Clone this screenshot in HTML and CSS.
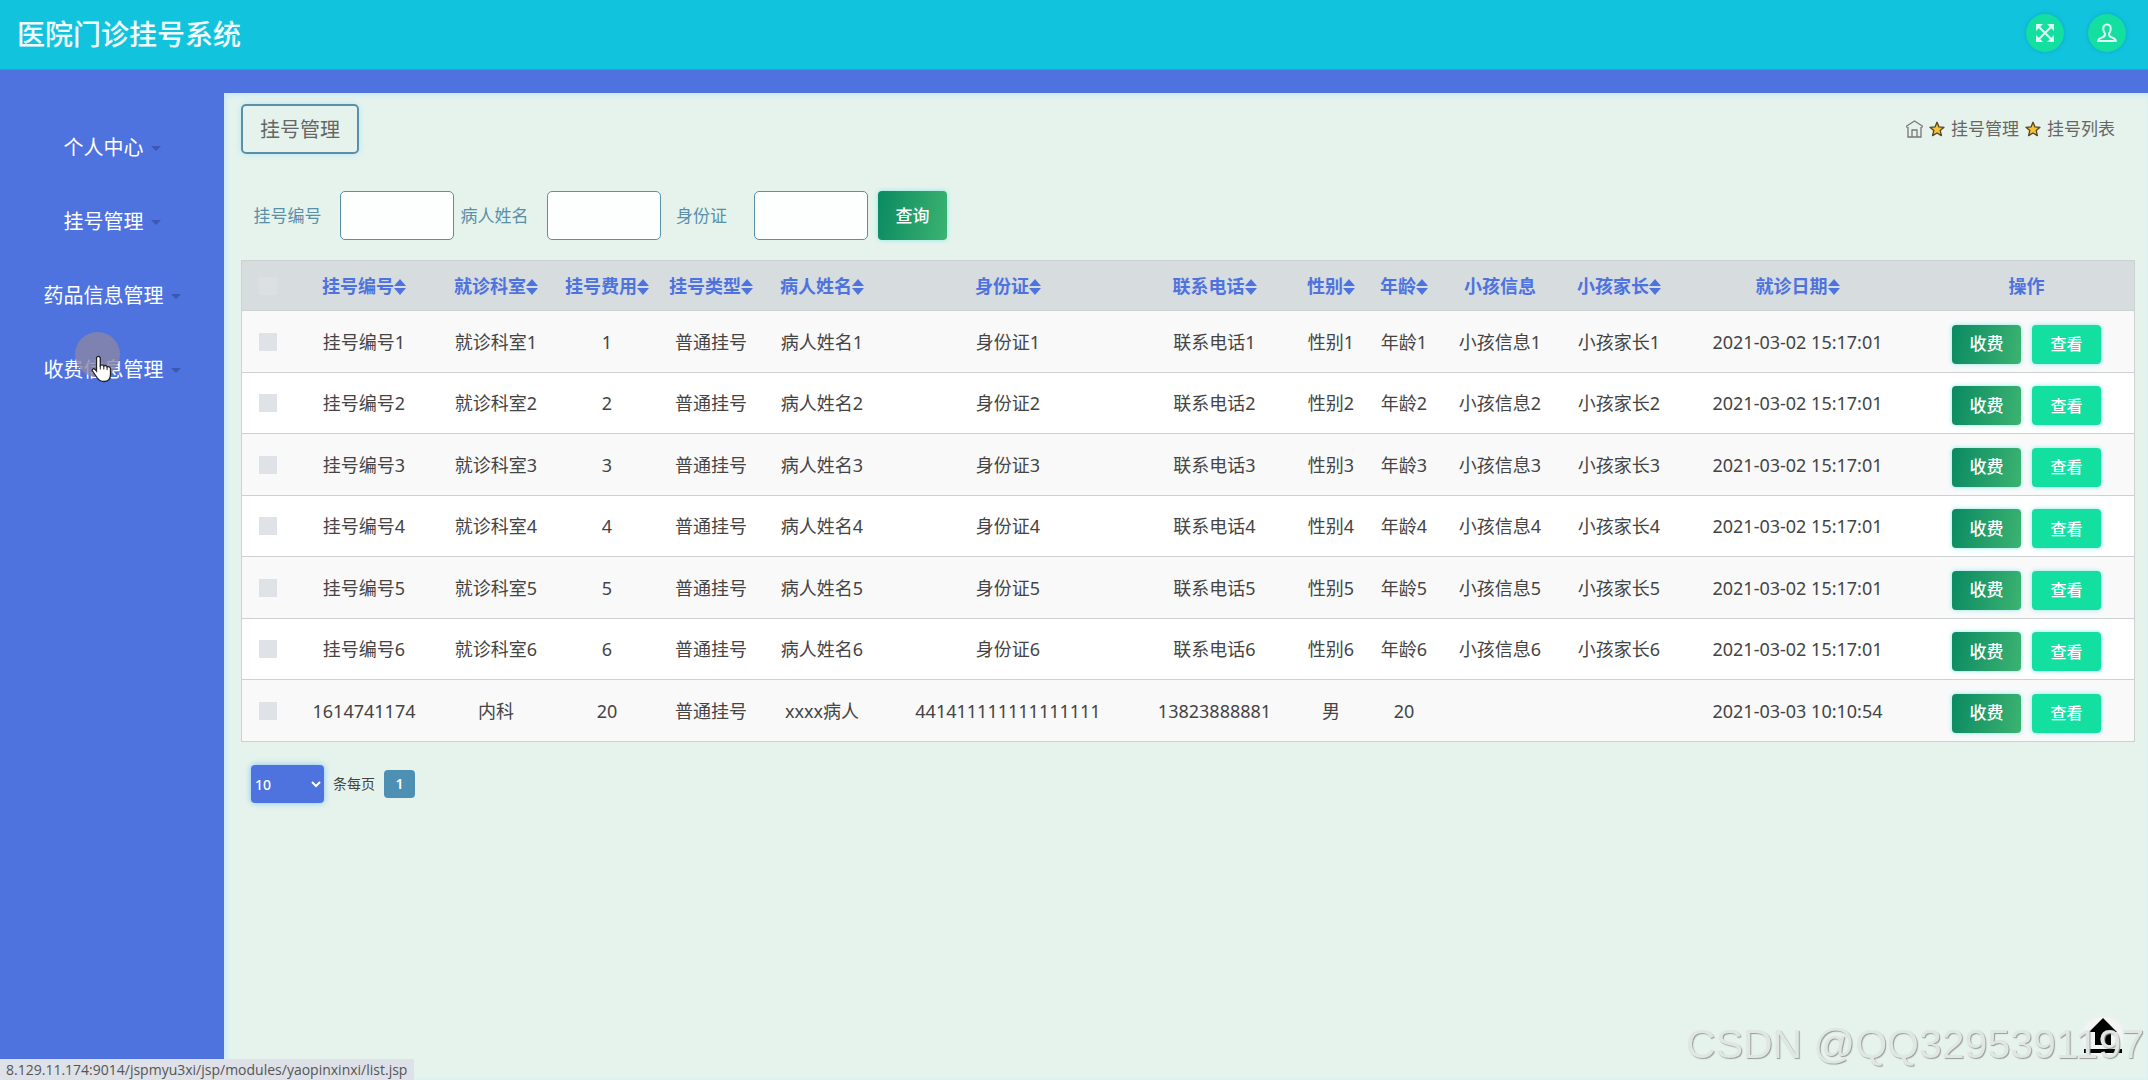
FILE: index.html
```html
<!DOCTYPE html>
<html lang="zh-CN">
<head>
<meta charset="utf-8">
<title>医院门诊挂号系统</title>
<link rel="stylesheet" href="styles.css">
</head>
<body>
<svg class="sprite" aria-hidden="true">
  <symbol id="sort" viewBox="0 0 12 16"><path d="M6 0l6 7H0zM6 16l6-7H0z"/></symbol>
  <symbol id="star" viewBox="0 0 16 16"><path d="M8 1.2l2 4.700 5 .4-3.800 3.300 1.200 5L8 12l-4.400 2.600 1.200-5L1 6.300l5-.4z" fill="#f5c33b" stroke="#54441c" stroke-width="1.300" stroke-linejoin="round"/></symbol>
</svg>
<header class="topbar">
  <h1 class="brand">医院门诊挂号系统</h1>
  <div class="tools">
    <button class="round" type="button" aria-label="全屏"><svg width="18" height="18" viewBox="0 0 18 18"><path d="M3 3l12 12M15 3L3 15" stroke="#dffaf0" stroke-width="2"/><path d="M0 0h7L0 7zM18 0v7l-7-7zM0 18v-7l7 7zM18 18h-7l7-7z" fill="#dffaf0"/></svg></button>
    <button class="round" type="button" aria-label="用户"><svg width="20" height="20" viewBox="0 0 20 20" fill="none" stroke="#dffaf0" stroke-width="2"><path d="M10 1.500c3 0 3.900 2 3.700 4.800-.2 2.200-1 3.500-1.700 4.300-.5 2.400.5 3.100 3 3.900 2.300.7 3.500 1.700 3.800 3.500H1.200c.3-1.800 1.500-2.800 3.800-3.500 2.500-.8 3.500-1.500 3-3.900-.7-.8-1.500-2.100-1.700-4.300C6.100 3.500 7 1.500 10 1.500z"/></svg></button>
  </div>
</header>
<div class="shell">
  <nav class="side">
    <a href="#">个人中心</a>
    <a href="#">挂号管理</a>
    <a href="#">药品信息管理</a>
    <a href="#">收费信息管理</a>
  </nav>
  <main class="content">
    <div class="heading">
      <h2 class="title">挂号管理</h2>
      <div class="crumbs">
        <svg width="17" height="18" viewBox="0 0 17 18" fill="none" stroke="#777" stroke-width="1.300"><path d="M.7 7.500V6L8.500 1l7.800 5v1.500M2 7v10h13V7M6 17v-7h5v7"/></svg>
        <svg class="star"><use href="#star"/></svg><a href="#">挂号管理</a>
        <svg class="star"><use href="#star"/></svg><span>挂号列表</span>
      </div>
    </div>
    <form class="search">
      <label for="no">挂号编号</label><input id="no" type="text">
      <label for="name">病人姓名</label><input id="name" type="text">
      <label for="card">身份证</label><input id="card" type="text">
      <button class="btn pay query" type="button">查询</button>
    </form>
    <table class="list">
      <colgroup><col class="c0"><col class="c1"><col class="c2"><col class="c3"><col class="c4"><col class="c5"><col class="c6"><col class="c7"><col class="c8"><col class="c9"><col class="c10"><col class="c11"><col class="c12"><col class="c13"></colgroup>
      <thead><tr>
        <th><input type="checkbox" aria-label="全选"></th>
        <th>挂号编号<svg class="sort"><use href="#sort"/></svg></th>
        <th>就诊科室<svg class="sort"><use href="#sort"/></svg></th>
        <th>挂号费用<svg class="sort"><use href="#sort"/></svg></th>
        <th>挂号类型<svg class="sort"><use href="#sort"/></svg></th>
        <th>病人姓名<svg class="sort"><use href="#sort"/></svg></th>
        <th>身份证<svg class="sort"><use href="#sort"/></svg></th>
        <th>联系电话<svg class="sort"><use href="#sort"/></svg></th>
        <th>性别<svg class="sort"><use href="#sort"/></svg></th>
        <th>年龄<svg class="sort"><use href="#sort"/></svg></th>
        <th>小孩信息</th>
        <th>小孩家长<svg class="sort"><use href="#sort"/></svg></th>
        <th>就诊日期<svg class="sort"><use href="#sort"/></svg></th>
        <th>操作</th>
      </tr></thead>
      <tbody>
        <tr><td><input type="checkbox" aria-label="选择"></td><td>挂号编号1</td><td>就诊科室1</td><td>1</td><td>普通挂号</td><td>病人姓名1</td><td>身份证1</td><td>联系电话1</td><td>性别1</td><td>年龄1</td><td>小孩信息1</td><td>小孩家长1</td><td>2021-03-02 15:17:01</td><td><div class="ops"><button class="btn pay" type="button">收费</button><button class="btn view" type="button">查看</button></div></td></tr>
        <tr><td><input type="checkbox" aria-label="选择"></td><td>挂号编号2</td><td>就诊科室2</td><td>2</td><td>普通挂号</td><td>病人姓名2</td><td>身份证2</td><td>联系电话2</td><td>性别2</td><td>年龄2</td><td>小孩信息2</td><td>小孩家长2</td><td>2021-03-02 15:17:01</td><td><div class="ops"><button class="btn pay" type="button">收费</button><button class="btn view" type="button">查看</button></div></td></tr>
        <tr><td><input type="checkbox" aria-label="选择"></td><td>挂号编号3</td><td>就诊科室3</td><td>3</td><td>普通挂号</td><td>病人姓名3</td><td>身份证3</td><td>联系电话3</td><td>性别3</td><td>年龄3</td><td>小孩信息3</td><td>小孩家长3</td><td>2021-03-02 15:17:01</td><td><div class="ops"><button class="btn pay" type="button">收费</button><button class="btn view" type="button">查看</button></div></td></tr>
        <tr><td><input type="checkbox" aria-label="选择"></td><td>挂号编号4</td><td>就诊科室4</td><td>4</td><td>普通挂号</td><td>病人姓名4</td><td>身份证4</td><td>联系电话4</td><td>性别4</td><td>年龄4</td><td>小孩信息4</td><td>小孩家长4</td><td>2021-03-02 15:17:01</td><td><div class="ops"><button class="btn pay" type="button">收费</button><button class="btn view" type="button">查看</button></div></td></tr>
        <tr><td><input type="checkbox" aria-label="选择"></td><td>挂号编号5</td><td>就诊科室5</td><td>5</td><td>普通挂号</td><td>病人姓名5</td><td>身份证5</td><td>联系电话5</td><td>性别5</td><td>年龄5</td><td>小孩信息5</td><td>小孩家长5</td><td>2021-03-02 15:17:01</td><td><div class="ops"><button class="btn pay" type="button">收费</button><button class="btn view" type="button">查看</button></div></td></tr>
        <tr><td><input type="checkbox" aria-label="选择"></td><td>挂号编号6</td><td>就诊科室6</td><td>6</td><td>普通挂号</td><td>病人姓名6</td><td>身份证6</td><td>联系电话6</td><td>性别6</td><td>年龄6</td><td>小孩信息6</td><td>小孩家长6</td><td>2021-03-02 15:17:01</td><td><div class="ops"><button class="btn pay" type="button">收费</button><button class="btn view" type="button">查看</button></div></td></tr>
        <tr><td><input type="checkbox" aria-label="选择"></td><td>1614741174</td><td>内科</td><td>20</td><td>普通挂号</td><td>xxxx病人</td><td>441411111111111111</td><td>13823888881</td><td>男</td><td>20</td><td></td><td></td><td>2021-03-03 10:10:54</td><td><div class="ops"><button class="btn pay" type="button">收费</button><button class="btn view" type="button">查看</button></div></td></tr>
      </tbody>
    </table>
    <div class="pager">
      <select id="size" class="size"><option>10</option></select>
      <label for="size">条每页</label>
      <button class="page" type="button">1</button>
    </div>
  </main>
</div>
<a class="to-top" href="#" aria-label="返回顶部"><svg width="40" height="40" viewBox="0 0 40 40"><path d="M20 1l14 14h-6v13H12V15H6zM1 32h38v4H1z"/></svg></a>
<div class="watermark">CSDN @QQ3295391197</div>
<div class="status">8.129.11.174:9014/jspmyu3xi/jsp/modules/yaopinxinxi/list.jsp</div>
<div class="pointer"><svg width="22" height="28" viewBox="0 0 22 28"><path d="M6 2c1.500-1.200 3.300-.4 3.300 1.500v7c1-1 3-.9 3.500.5 1.200-.9 2.900-.5 3.300.9 1.500-.7 3.400.2 3.400 2.100v5.500c0 4-2 7-6.500 7-4 0-5.500-1.500-7-4L1.500 16c-.9-1.800 1-3 2.500-1.700l1.500 1.700V3.500c0-.7.1-1.200.5-1.500z" fill="#fff" stroke="#222" stroke-width="1.300"/><path d="M9.300 10.500v4M12.800 11v3.500M16.100 12v3" stroke="#222" fill="none"/></svg></div>
</body>
</html>
```
FILE: styles.css
```css
* { box-sizing: border-box; }
body {
  margin: 0;
  min-height: 100vh;
  display: flex;
  flex-direction: column;
  background: #4e73df;
  color: #444;
  font: 18px/24px "Noto Sans", "Noto Sans CJK SC", sans-serif;
}
a { color: inherit; text-decoration: none; }
button, input, select { font: inherit; margin: 0; }
.sprite { display: none; }

.topbar {
  height: 70px;
  padding: 0 22px 4px 17px;
  display: flex;
  align-items: center;
  justify-content: space-between;
  background: #12c3de;
  border-bottom: 1px solid #3497d8;
}
.brand { margin: 0; padding-top: 2px; font-size: 28px; line-height: 40px; font-weight: 500; color: #f2fdff; }
.tools { display: flex; gap: 24px; }
.round {
  width: 38px;
  height: 38px;
  padding: 0;
  display: grid;
  place-items: center;
  border: 0;
  border-radius: 50%;
  background: #13dfa0;
  box-shadow: 0 0 4px #0fa6c0;
}

.shell { flex: 1; display: flex; padding-top: 23px; }
.side { flex: 0 0 224px; padding-top: 18px; display: flex; flex-direction: column; }
.side a {
  height: 74px;
  display: flex;
  align-items: center;
  justify-content: center;
  gap: 7px;
  font-size: 20px;
  color: #fff;
}
.side a::after {
  content: "";
  border: 5px solid transparent;
  border-top-color: #3a58b4;
  border-bottom: 0;
}

.content {
  flex: 1;
  min-width: 0;
  padding: 11px 16px 0 17px;
  background: #e5f3ec;
  box-shadow: inset 2px 2px 6px #c4e8fa;
}
.heading { display: flex; align-items: center; justify-content: space-between; padding-right: 17px; }
.title {
  margin: 0;
  padding: 12px 17px 10px;
  border: 2px solid #5b8fa8;
  border-radius: 5px;
  box-shadow: 0 0 6px #b5e6f7;
  font-size: 20px;
  font-weight: 400;
  color: #666;
}
.crumbs { display: flex; align-items: center; gap: 6px; font-size: 17px; color: #666; }
.star { width: 16px; height: 16px; }

.search { display: flex; align-items: center; margin: 37px 0 20px 6px; }
.search label { width: 81px; text-align: center; font-size: 17px; color: #5b8fa8; }
.search input {
  width: 114px;
  height: 49px;
  margin: 0 0 0 12px;
  border: 1px solid #5b8fa8;
  border-radius: 5px;
  background: #fcfffd;
}
.btn {
  height: 39px;
  width: 69px;
  padding: 0;
  border: 0;
  border-radius: 4px;
  color: #fff;
  font-size: 17px;
  font-weight: 500;
  box-shadow: 0 0 5px #8fe8ea;
}
.pay { background: linear-gradient(100deg, #0a8a62, #3cb371); }
.view { background: #13dfa0; font-size: 16px; }
.search .query { height: 49px; margin-left: 10px; }

.list {
  width: 100%;
  table-layout: fixed;
  border-collapse: separate;
  border-spacing: 0;
  border: 1px solid #cdd1d2;
  border-bottom: 0;
  text-align: center;
}
.c0 { width: 51px; } .c1 { width: 142px; } .c2 { width: 122px; } .c3 { width: 100px; }
.c4 { width: 108px; } .c5 { width: 114px; } .c6 { width: 258px; } .c7 { width: 155px; }
.c8 { width: 78px; } .c9 { width: 68px; } .c10 { width: 124px; } .c11 { width: 114px; }
.c12 { width: 243px; } .c13 { width: 215px; }
.list th, .list td { padding: 0; white-space: nowrap; border-bottom: 1px solid #cdd1d2; }
.list th { height: 50px; background: #d7dcdf; color: #4e73df; font-weight: 600; }
.list td { height: 61px; background: #fff; }
.list tbody tr:nth-child(odd) td { height: 62px; background: #f9f9fa; }
.sort { width: 12px; height: 16px; vertical-align: -2px; fill: #4e73df; }
.list input {
  appearance: none;
  display: block;
  width: 18px;
  height: 18px;
  margin: 0 auto;
  background: #dfe2e6;
}
.list th input { background: #dcdfe4; }
.ops { display: flex; justify-content: center; gap: 11px; padding-top: 5px; }

.pager { display: flex; align-items: center; gap: 9px; padding: 23px 10px; font-size: 14px; }
.size {
  width: 73px;
  height: 38px;
  border: 0;
  border-radius: 4px;
  background: #4e73df;
  color: #fff;
  font-weight: 500;
  box-shadow: 0 0 6px #7fc4f5;
}
.page {
  width: 31px;
  height: 28px;
  padding: 0;
  border: 0;
  border-radius: 4px;
  background: #4e8fb4;
  color: #fff;
  font-weight: 600;
}

.to-top {
  position: fixed;
  right: 25px;
  bottom: 23px;
  width: 40px;
  height: 40px;
  border-radius: 50%;
  background: #f3f5f4;
  box-shadow: 0 0 6px #f3f5f4;
}
.watermark {
  position: fixed;
  right: 4px;
  bottom: 10px;
  font: 41px/52px "Liberation Sans", sans-serif;
  color: #dfe6e3;
  text-shadow: 1px 1px 1px #999;
}
.status {
  position: fixed;
  left: 0;
  bottom: 0;
  padding: 1px 7px 0 6px;
  background: #dee1e8;
  font-family: "Open Sans", sans-serif;
  font-size: 14px;
  line-height: 20px;
  color: #555;
}
.pointer {
  position: fixed;
  left: 75px;
  top: 332px;
  width: 45px;
  height: 45px;
  padding: 23px 0 0 16px;
  border-radius: 50%;
  background: #8a86a5cc;
}
```
